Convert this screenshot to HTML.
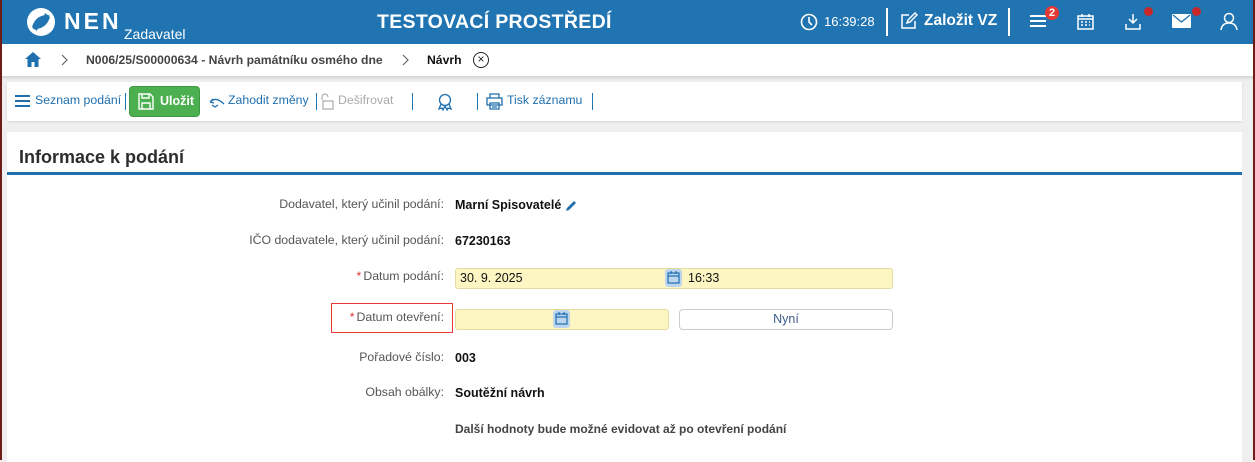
<!DOCTYPE html>
<html><head><meta charset="utf-8"><style>
*{box-sizing:border-box;margin:0;padding:0}
body{width:1255px;height:460px;overflow:hidden;background:#efefef;font-family:"Liberation Sans",sans-serif;position:relative;font-size:12.5px;color:#222}
.lb{position:absolute;left:0;top:0;width:2px;height:460px;background:#6e1c16;z-index:9}
.rb{position:absolute;right:0;top:0;width:2px;height:460px;background:#6e1c16;z-index:9}
.hdr{position:absolute;left:0;top:0;width:1255px;height:44px;background:#1f74b1;color:#fff}
.bc{position:absolute;left:0;top:44px;width:1255px;height:32px;background:#fff;box-shadow:0 2px 3px rgba(0,0,0,.12)}
.tb{position:absolute;left:7px;top:82px;width:1235px;height:39px;background:#fff;box-shadow:0 1px 2px rgba(0,0,0,.1)}
.pn{position:absolute;left:7px;top:132px;width:1235px;height:330px;background:#fff}
.abs{position:absolute;white-space:nowrap}
.lbl{position:absolute;right:811px;color:#555;font-size:12.3px;text-align:right;white-space:nowrap}
.val{position:absolute;left:455px;font-size:12.5px;color:#111;white-space:nowrap}
.inp{position:absolute;background:#fdf6c3;border:1px solid #e3dca0;border-radius:3px;height:21px}
.star{color:#d33;margin-right:2px}
.sep{display:inline-block;width:1px;height:17px;background:#1f74b1;vertical-align:middle}
.tbt{color:#1f6fae;font-size:12.3px}
</style></head><body>
<div class="lb"></div><div class="rb"></div>
<div class="hdr">
 <svg class="abs" style="left:26px;top:7px" width="30" height="30" viewBox="0 0 30 30"><circle cx="15" cy="15" r="14" fill="#fff"/><path d="M6 20 Q10 7 24 8 Q14 12 11 24Z" fill="#1f74b1"/><path d="M24 10 Q20 23 6 22 Q16 18 19 6Z" fill="#1f74b1"/></svg>
 <div class="abs" style="left:64px;top:8px;font-size:23px;font-weight:bold;letter-spacing:3px">NEN</div>
 <div class="abs" style="left:124px;top:26px;font-size:14px">Zadavatel</div>
 <div class="abs" style="left:377px;top:11px;font-size:19.5px;font-weight:bold;letter-spacing:.3px">TESTOVACÍ PROSTŘEDÍ</div>
 <svg class="abs" style="left:800px;top:13px" width="18" height="18" viewBox="0 0 18 18" fill="none" stroke="#fff" stroke-width="1.6"><circle cx="9" cy="9" r="7.5"/><path d="M9 4v5l3 3"/></svg>
 <div class="abs" style="left:824px;top:14px;font-size:13px">16:39:28</div>
 <div class="abs" style="left:886px;top:8px;width:2px;height:28px;background:#fff"></div>
 <svg class="abs" style="left:900px;top:12px" width="18" height="18" viewBox="0 0 18 18" fill="none" stroke="#fff" stroke-width="1.5"><path d="M9 3H2v13h13V9"/><path d="M7 11l1-3 7-7 2 2-7 7z"/></svg>
 <div class="abs" style="left:924px;top:12px;font-size:15.5px;font-weight:bold">Založit VZ</div>
 <div class="abs" style="left:1008px;top:8px;width:2px;height:28px;background:#fff"></div>
 <div class="abs" style="left:1030px;top:15px;width:16px;height:2px;background:#fff;box-shadow:0 5px 0 #fff,0 10px 0 #fff"></div>
 <div class="abs" style="left:1045px;top:6px;width:14px;height:14px;border-radius:7px;background:#e53935;font-size:11px;font-weight:bold;text-align:center;line-height:14px">2</div>
 <svg class="abs" style="left:1077px;top:13px" width="17" height="17" viewBox="0 0 17 17" fill="none" stroke="#fff" stroke-width="1.5"><rect x="1" y="3" width="15" height="13"/><path d="M1 6h15M5 1v3M12 1v3"/><path d="M4 9h2M8 9h2M12 9h1M4 12h2M8 12h2M12 12h1"/></svg>
 <svg class="abs" style="left:1124px;top:13px" width="18" height="18" viewBox="0 0 18 18" fill="none" stroke="#fff" stroke-width="1.5"><path d="M9 1v9M5 6l4 4 4-4M2 11v5h14v-5"/></svg>
 <div class="abs" style="left:1144px;top:7px;width:9px;height:9px;border-radius:5px;background:#c62828"></div>
 <svg class="abs" style="left:1172px;top:14px" width="19" height="14" viewBox="0 0 19 14"><rect width="19" height="14" rx="1" fill="#fff"/><path d="M1 1l8.5 7L18 1" fill="none" stroke="#1f74b1" stroke-width="1.3"/></svg>
 <div class="abs" style="left:1192px;top:7px;width:9px;height:9px;border-radius:5px;background:#c62828"></div>
 <svg class="abs" style="left:1220px;top:12px" width="18" height="19" viewBox="0 0 18 19" fill="none" stroke="#fff" stroke-width="1.5"><circle cx="9" cy="6" r="4.5"/><path d="M1 18q1-7 8-7t8 7"/></svg>
</div>
<div class="bc">
 <svg class="abs" style="left:24px;top:7px" width="18" height="17" viewBox="0 0 18 17"><path d="M9 1L1 8h2.5v8h4v-5h3v5h4V8H17z" fill="#1f6fae"/></svg>
 <svg class="abs" style="left:61px;top:10px" width="8" height="12" viewBox="0 0 8 12" fill="none" stroke="#666" stroke-width="1.2"><path d="M1 1l5 5-5 5"/></svg>
 <div class="abs" style="left:86px;top:9px;font-size:12.2px;font-weight:bold;color:#444">N006/25/S00000634 - Návrh památníku osmého dne</div>
 <svg class="abs" style="left:402px;top:10px" width="8" height="12" viewBox="0 0 8 12" fill="none" stroke="#666" stroke-width="1.2"><path d="M1 1l5 5-5 5"/></svg>
 <div class="abs" style="left:427px;top:9px;font-size:12.2px;font-weight:bold;color:#111">Návrh</div>
 <div class="abs" style="left:473px;top:8px;width:16px;height:16px;border:1.3px solid #222;border-radius:8px;font-size:12px;text-align:center;line-height:13px">×</div>
</div>
<div class="tb">
 <div class="abs" style="left:8px;top:13px;width:15px;height:1.5px;background:#1f6fae;box-shadow:0 5px 0 #1f6fae,0 10px 0 #1f6fae"></div>
 <div class="abs tbt" style="left:28px;top:11px">Seznam podání</div>
 <span class="sep abs" style="left:118px;top:11px"></span>
 <div class="abs" style="left:122px;top:4px;width:71px;height:31px;background:#4caf50;border-radius:4px;border:1px solid #3e9a42;color:#fff;font-weight:bold;font-size:12.5px;padding:7px 0 0 30px">Uložit
  <svg class="abs" style="left:8px;top:6px" width="16" height="17" viewBox="0 0 16 17" fill="none" stroke="#fff" stroke-width="1.4"><path d="M1 1h11l3 3v12H1z"/><path d="M4 1v4h7V1M4 16v-6h8v6"/></svg></div>
 <svg class="abs" style="left:201px;top:13px" width="17" height="13" viewBox="0 0 17 13" fill="none" stroke="#1f6fae" stroke-width="1.3"><path d="M2 7q6-6 14 2M2 7l3-3M2 7l4 1"/><path d="M4 10l3 2 3-2"/></svg>
 <div class="abs tbt" style="left:221px;top:11px">Zahodit změny</div>
 <span class="sep abs" style="left:309px;top:11px"></span>
 <svg class="abs" style="left:313px;top:11px" width="14" height="17" viewBox="0 0 14 17" fill="none" stroke="#aaa" stroke-width="1.2"><path d="M2 7V4a3 3 0 0 1 6 0"/><rect x="3" y="8" width="10" height="8"/></svg>
 <div class="abs" style="left:331px;top:11px;color:#aaa;font-size:12.3px">Dešifrovat</div>
 <span class="sep abs" style="left:405px;top:11px"></span>
 <svg class="abs" style="left:430px;top:11px" width="16" height="18" viewBox="0 0 16 18" fill="none" stroke="#1f6fae" stroke-width="1.3"><circle cx="8" cy="7" r="5.5"/><path d="M4 11l-2 5 3-1 1 2 2-4 2 4 1-2 3 1-2-5"/></svg>
 <span class="sep abs" style="left:470px;top:11px"></span>
 <svg class="abs" style="left:479px;top:11px" width="17" height="17" viewBox="0 0 17 17" fill="none" stroke="#1f6fae" stroke-width="1.3"><path d="M4 5V1h9v4M1 5h15v7H1zM4 10h9v6H4zM6 12h5M6 14h5"/></svg>
 <div class="abs tbt" style="left:500px;top:11px">Tisk záznamu</div>
 <span class="sep abs" style="left:585px;top:11px"></span>
</div>
<div class="pn">
 <div class="abs" style="left:12px;top:15px;font-size:18px;font-weight:bold;color:#2d2d2d">Informace k podání</div>
 <div class="abs" style="left:0;top:40px;width:1235px;height:3px;background:#1f6fae"></div>
</div>
<div class="lbl" style="top:197px">Dodavatel, který učinil podání:</div>
<div class="val" style="top:198px;font-weight:bold">Marní Spisovatelé</div>
<svg class="abs" style="left:565px;top:199px" width="13" height="13" viewBox="0 0 13 13"><path d="M1 12l1-3 7-7 2 2-7 7z" fill="#1f6fae"/></svg>
<div class="lbl" style="top:233px">IČO dodavatele, který učinil podání:</div>
<div class="val" style="top:234px;font-weight:bold">67230163</div>
<div class="lbl" style="top:269px"><span class="star">*</span>Datum podání:</div>
<div class="inp" style="left:455px;top:268px;width:438px"></div>
<div class="val" style="left:460px;top:271px">30. 9. 2025</div>
<div class="abs" style="left:665px;top:269px;width:17px;height:18px;background:#bdd6ee;border-radius:3px"></div>
<svg class="abs" style="left:667px;top:271px" width="13" height="13" viewBox="0 0 13 13" fill="none" stroke="#1f6fae" stroke-width="1.2"><rect x="1" y="2" width="11" height="10"/><path d="M1 5h11M4 0v3M9 0v3"/></svg>
<div class="val" style="left:688px;top:271px">16:33</div>
<div class="abs" style="left:331px;top:303px;width:122px;height:30px;border:1px solid #e53935"></div>
<div class="lbl" style="top:310px"><span class="star">*</span>Datum otevření:</div>
<div class="inp" style="left:455px;top:309px;width:214px"></div>
<div class="abs" style="left:553px;top:310px;width:17px;height:18px;background:#bdd6ee;border-radius:3px"></div>
<svg class="abs" style="left:555px;top:312px" width="13" height="13" viewBox="0 0 13 13" fill="none" stroke="#1f6fae" stroke-width="1.2"><rect x="1" y="2" width="11" height="10"/><path d="M1 5h11M4 0v3M9 0v3"/></svg>
<div class="abs" style="left:679px;top:309px;width:214px;height:21px;border:1px solid #ccc;border-radius:4px;background:#fff;text-align:center;line-height:19px;color:#3f5f8a;font-size:12.5px">Nyní</div>
<div class="lbl" style="top:350px">Pořadové číslo:</div>
<div class="val" style="top:351px;font-weight:bold">003</div>
<div class="lbl" style="top:385px">Obsah obálky:</div>
<div class="val" style="top:386px;font-weight:bold">Soutěžní návrh</div>
<div class="val" style="top:422px;color:#444;font-weight:bold;font-size:12px">Další hodnoty bude možné evidovat až po otevření podání</div>
</body></html>
